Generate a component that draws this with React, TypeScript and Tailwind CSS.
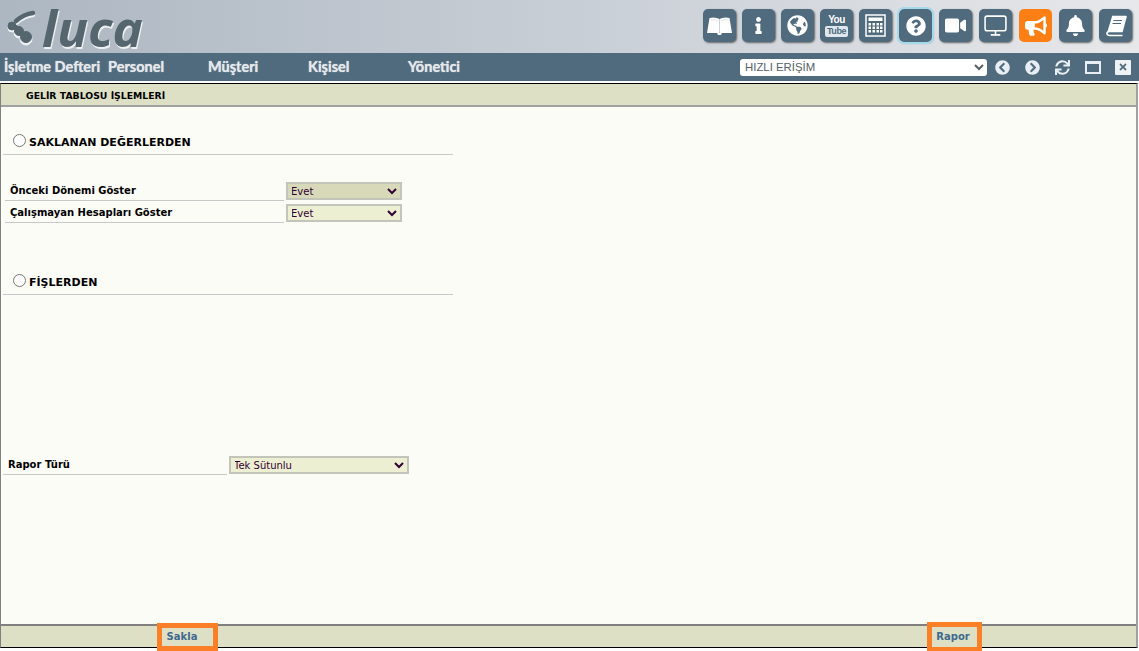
import type { ReactNode } from "react";
import {
  FaBell,
  FaBullhorn,
  FaChevronCircleLeft,
  FaChevronCircleRight,
  FaGlobeAmericas,
  FaInfo,
  FaQuestionCircle,
  FaSync,
  FaTimes,
  FaVideo,
} from "react-icons/fa";
import { FiMonitor } from "react-icons/fi";

function LogoMark() {
  return (
    <svg width="30" height="38" viewBox="0 0 30 38" className="mr-[6px] shrink-0">
      <g fill="#f0f2f4" stroke="#f0f2f4">
        <path d="M10 15 Q18 8 27 7" strokeWidth="4.5" fill="none" strokeLinecap="round" />
        <circle cx="6" cy="20" r="4" />
        <circle cx="13" cy="25" r="5" />
        <circle cx="20" cy="31" r="6" />
      </g>
      <g fill="#56666e" stroke="#56666e">
        <path d="M10 13 Q18 6 27 5" strokeWidth="4.5" fill="none" strokeLinecap="round" />
        <path d="M8 16 Q12 19 14 22" strokeWidth="2" fill="none" />
        <circle cx="6" cy="18" r="4" />
        <circle cx="13" cy="23" r="4.5" />
        <circle cx="20" cy="29" r="5.5" />
      </g>
    </svg>
  );
}

function OpenBookIcon() {
  return (
    <svg width="27" height="22" viewBox="0 0 27 22">
      <path d="M3.5 3 Q9 1.5 13.5 4 Q18 1.5 23.5 3 L26 18 L16 18 L15 20 L12 20 L11 18 L1 18 Z" fill="#fff" />
      <path d="M13.5 4 V18" stroke="#c9d3da" strokeWidth="1" />
      <path d="M5 5 Q9 4 12 6 M15 6 Q18 4 22 5" stroke="#dfe5e9" strokeWidth="1" fill="none" />
    </svg>
  );
}

function CalculatorIcon() {
  return (
    <svg width="23" height="23" viewBox="0 0 23 23" fill="none">
      <rect x="2" y="1" width="19" height="21" stroke="#fff" strokeWidth="1.5" />
      <rect x="4.5" y="3.5" width="14" height="3.5" fill="#fff" />
      <g fill="#fff">
        {[9, 12.5, 16].map((y) =>
          [4.5, 8.5, 12.5, 16].map((x) => <rect key={`${x}-${y}`} x={x} y={y} width="2.5" height="2.5" />)
        )}
      </g>
    </svg>
  );
}

function SlantedBookIcon() {
  return (
    <svg width="24" height="24" viewBox="0 0 24 24" fill="none">
      <path d="M8 2.5 H22 L18 17.5 H5 Q2.5 18 3 20 Q3.5 21.5 6 21.5 H18.5" stroke="#fff" strokeWidth="1.6" strokeLinejoin="round" />
      <path d="M8 2.5 L3.6 17 L3 20 L5 17.5 H18 L22 2.5 Z" fill="#fff" />
      <path d="M9.5 6.5 H18 M8.5 9.5 H17" stroke="#4f6b7d" strokeWidth="1.2" />
    </svg>
  );
}

function YoutubeIcon() {
  return (
    <div className="flex flex-col items-center font-['Liberation_Sans',sans-serif] leading-none font-bold">
      <span className="text-[10px] leading-[10px] tracking-[-0.5px] text-white">You</span>
      <span className="mt-px rounded-[2px] bg-[#dfe8ef] px-[2px] text-[9px] leading-[11px] tracking-[-0.4px] text-[#4f6b7d]">
        Tube
      </span>
    </div>
  );
}

function ToolButton({ children, orange, active }: { children: ReactNode; orange?: boolean; active?: boolean }) {
  return (
    <button
      className={`flex h-[33px] w-[33px] items-center justify-center rounded-[5px] text-white ${
        orange ? "bg-[#fb7f14]" : "bg-[#4f6b7d] shadow-[1px_1px_2px_#666]"
      } ${active ? "outline-2 outline-[#a5d9ec]" : ""}`}
    >
      {children}
    </button>
  );
}

function FieldSelect({ className, value }: { className: string; value: string }) {
  return (
    <select
      defaultValue={value}
      className={`border-2 border-[#c3c4ba] pl-0 indent-[-1px] font-['DejaVu_Sans',sans-serif] text-[10px] text-[#330033] ${className}`}
    >
      <option>{value}</option>
    </select>
  );
}

function SectionHead({ title }: { title: string }) {
  return (
    <div className="ml-[2px] flex h-[21px] w-[450px] items-start border-b border-[#c8c8c8] pl-[10px]">
      <input type="radio" name="kaynak" className="m-0 mr-[3px] h-[13px] w-[13px]" />
      <span className="mt-[2px] text-[11px] leading-[14px] font-bold text-black">{title}</span>
    </div>
  );
}

export default function App() {
  return (
    <div className="flex h-[651px] w-[1139px] flex-col overflow-hidden bg-white font-['DejaVu_Sans',sans-serif]">
      {/* ust bant */}
      <header className="flex h-[53px] items-start bg-gradient-to-r from-[#adb7c1] via-[#c8ced6] to-[#e7e8ea] pl-[6px]">
        <div className="flex items-start pt-[8px]">
          <LogoMark />
          <span className="-mt-[1px] font-['Open_Sans',sans-serif] text-[51px] leading-[40px] font-bold text-[#56666e] italic [text-shadow:1px_2px_0_#eef0f2]">
            luca
          </span>
        </div>
        <div className="ml-auto mt-[9px] mr-[7px] flex gap-[7px]">
          <div className="flex gap-[6px]">
            <ToolButton><OpenBookIcon /></ToolButton>
            <ToolButton><FaInfo size={17} /></ToolButton>
            <ToolButton><FaGlobeAmericas size={21} /></ToolButton>
            <ToolButton><YoutubeIcon /></ToolButton>
            <ToolButton><CalculatorIcon /></ToolButton>
          </div>
          <ToolButton active><FaQuestionCircle size={20} /></ToolButton>
          <ToolButton><FaVideo size={21} /></ToolButton>
          <ToolButton><FiMonitor size={25} strokeWidth={1.5} /></ToolButton>
          <ToolButton orange><FaBullhorn size={22} /></ToolButton>
          <ToolButton><FaBell size={21} /></ToolButton>
          <ToolButton><SlantedBookIcon /></ToolButton>
        </div>
      </header>

      {/* menu */}
      <nav className="flex h-[28px] items-center bg-[#4f6b7d] pl-[4px] font-['Lato',sans-serif] text-[14.5px] font-bold text-[#e4e8ea] [text-shadow:0_0_1px_#e4e8ea]">
        <span className="w-[104px] shrink-0">İşletme Defteri</span>
        <span className="w-[100px] shrink-0">Personel</span>
        <span className="w-[100px] shrink-0">Müşteri</span>
        <span className="w-[100px] shrink-0">Kişisel</span>
        <span className="w-[52px] shrink-0">Yönetici</span>
        <select
          defaultValue="HIZLI ERİŞİM"
          className="ml-[280px] h-[17px] w-[247px] shrink-0 rounded-[3px] bg-white pl-[1px] font-['Liberation_Sans',sans-serif] text-[11.4px] font-normal text-[#555f66] [text-shadow:none]"
        >
          <option>HIZLI ERİŞİM</option>
        </select>
        <div className="flex shrink-0 items-center text-[#e8eef3] [text-shadow:none]">
          <span className="flex w-[30px] justify-center"><FaChevronCircleLeft size={15} /></span>
          <span className="flex w-[30px] justify-center"><FaChevronCircleRight size={15} /></span>
          <span className="flex w-[30px] justify-center"><FaSync size={15} /></span>
          <span className="flex w-[31px] justify-center">
            <span className="h-[13px] w-[16px] border-2 border-t-[3px] border-[#e8eef3] bg-[#4f6b7d]" />
          </span>
          <span className="flex w-[30px] justify-center">
            <span className="flex h-[15px] w-[16px] items-center justify-center rounded-[1px] bg-[#eef2f5] text-[#4f6b7d]">
              <FaTimes size={10} />
            </span>
          </span>
        </div>
      </nav>

      <div className="h-[2px] bg-white" />

      {/* panel */}
      <main className="flex h-[565px] w-[1138px] flex-col border-t border-r-2 border-b border-l border-t-black border-r-[#a0a0a0] border-b-black border-l-[#808080] bg-[#fbfcf6] text-[10px] text-black">
        <div className="flex h-[23px] shrink-0 items-center border-b-2 border-b-[#a0a0a0] bg-[#dee0c6] pt-[2px] pl-[25px] text-[9.3px] font-bold">
          GELİR TABLOSU İŞLEMLERİ
        </div>

        <div className="flex-1">
          <div className="pt-[27px]">
            <SectionHead title="SAKLANAN DEĞERLERDEN" />
          </div>

          <div className="mt-[27px] flex items-start pl-[4px]">
            <div className="h-[19px] w-[279px] border-b border-[#c8c8c8] pt-[2px] pl-[5px] text-[10px] leading-[14px] font-bold">
              Önceki Dönemi Göster
            </div>
            <FieldSelect value="Evet" className="ml-[2px] h-[18px] w-[116px] bg-[#d8d9b9]" />
          </div>
          <div className="mt-[3px] flex items-start pl-[4px]">
            <div className="h-[19px] w-[279px] border-b border-[#c8c8c8] pt-[2px] pl-[5px] text-[10px] leading-[14px] font-bold">
              Çalışmayan Hesapları Göster
            </div>
            <FieldSelect value="Evet" className="ml-[2px] h-[18px] w-[116px] bg-[#ecefd2]" />
          </div>

          <div className="mt-[51px]">
            <SectionHead title="FİŞLERDEN" />
          </div>

          <div className="mt-[161px] flex items-start pl-[2px]">
            <div className="h-[19px] w-[224px] border-b border-[#c8c8c8] pt-[2px] pl-[5px] text-[10px] leading-[14px] font-bold">
              Rapor Türü
            </div>
            <FieldSelect value="Tek Sütunlu" className="ml-[2px] h-[18px] w-[180px] bg-[#ecefd2]" />
          </div>
        </div>

        <div className="flex h-[23px] shrink-0 items-center border-t-2 border-t-[#808080] bg-[#dee0c6] text-[10px] font-bold text-[#3f6a8f]">
          <button className="-my-[3px] ml-[156px] h-[28px] w-[61px] border-[5px] border-[#fb7f27] pr-[11px] font-bold">Sakla</button>
          <button className="-my-[4px] ml-[709px] h-[30px] w-[55px] border-[5px] border-[#fb7f27] pr-[3px] font-bold">Rapor</button>
        </div>
      </main>
    </div>
  );
}
